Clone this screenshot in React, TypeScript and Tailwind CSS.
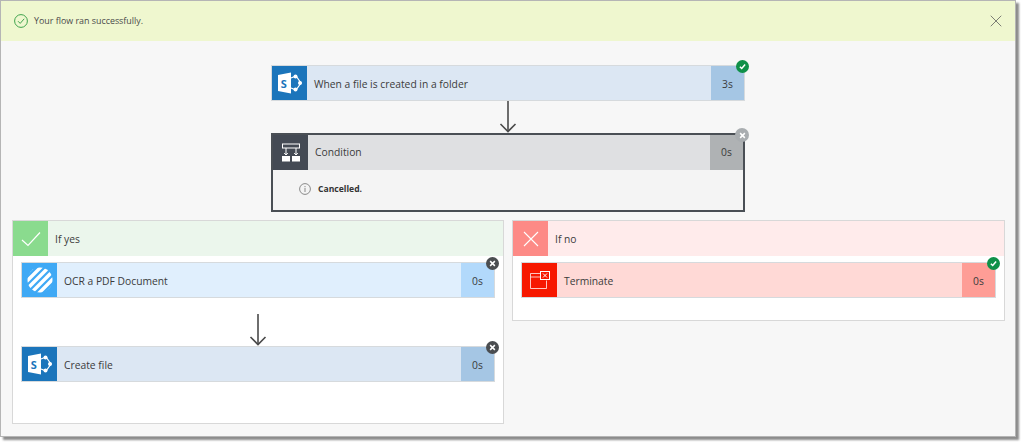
import { X } from 'lucide-react';
import type { ReactNode } from 'react';

function SharePointIcon() {
  return (
    <svg width="26" height="22" viewBox="0 0 26 22" fill="none">
      <path d="M14 6 L19 4 L24 11 L19 18 L14 16" stroke="white" strokeWidth="1.2" />
      <circle cx="18.5" cy="4.5" r="2" fill="white" />
      <circle cx="23" cy="11" r="2" fill="white" />
      <circle cx="18.5" cy="17.5" r="2" fill="white" />
      <path d="M1 3 L14 0.5 V21.5 L1 19 Z" fill="white" />
      <text x="3.8" y="15.5" fontSize="11" fontWeight="700" fill="#1b75bb" fontFamily="'Open Sans', sans-serif">S</text>
    </svg>
  );
}

function OcrIcon() {
  return (
    <svg width="26" height="26" viewBox="0 0 26 26">
      <defs>
        <clipPath id="ocr-circle">
          <circle cx="13" cy="13" r="12.5" />
        </clipPath>
      </defs>
      <g clipPath="url(#ocr-circle)" stroke="white" strokeWidth="3.4">
        <path d="M-2 8 L8 -2" />
        <path d="M-2 16 L16 -2" />
        <path d="M-2 24 L24 -2" />
        <path d="M2 28 L28 2" />
        <path d="M10 28 L28 10" />
        <path d="M18 28 L28 18" />
      </g>
    </svg>
  );
}

function ConditionIcon() {
  return (
    <svg width="20" height="20" viewBox="0 0 20 20" fill="none">
      <rect x="1.5" y="1" width="17" height="4" stroke="white" strokeWidth="1" />
      <path d="M5 5 V12 M15 5 V12" stroke="white" strokeWidth="1" />
      <path d="M3.2 10 L5 12 L6.8 10 M13.2 10 L15 12 L16.8 10" stroke="white" strokeWidth="1" />
      <rect x="1" y="13" width="8" height="5.5" fill="white" />
      <rect x="11" y="13" width="8" height="5.5" fill="white" />
    </svg>
  );
}

function TerminateIcon() {
  return (
    <svg width="20" height="19" viewBox="0 0 20 19" fill="none" stroke="white" strokeWidth="1">
      <path d="M10 2.5 H0.5 V17.5 H16.5 V9.5" opacity="0.75" />
      <path d="M0.5 6 H10" opacity="0.75" />
      <rect x="10.5" y="0.5" width="9" height="8" />
      <path d="M13 2.5 L17 6.5 M17 2.5 L13 6.5" />
    </svg>
  );
}

function Badge({ ok, dark, ringed }: { ok?: boolean; dark?: boolean; ringed?: boolean }) {
  return (
    <span
      className={`absolute flex items-center justify-center rounded-full ${
        ok ? 'bg-[#0f9048]' : dark ? 'bg-[#4a4d50]' : 'bg-[#a9adb0]'
      } ${ringed ? 'w-[14px] h-[14px] -top-[5px] -right-[4px]' : 'w-[13px] h-[13px] -top-[6px] -right-[5px]'}`}
    >
      <svg width="7" height="7" viewBox="0 0 8 8" fill="none" stroke="white" strokeWidth="1.7">
        {ok ? <path d="M1 4.3 L3.1 6.3 L7 1.8" /> : <path d="M1.3 1.3 L6.7 6.7 M6.7 1.3 L1.3 6.7" />}
      </svg>
    </span>
  );
}

function StepCard({
  title,
  time,
  icon,
  iconBg,
  bodyBg,
  timeBg,
  badge,
}: {
  title: string;
  time: string;
  icon: ReactNode;
  iconBg: string;
  bodyBg: string;
  timeBg: string;
  badge: ReactNode;
}) {
  return (
    <div className={`relative flex h-[36px] w-full border border-[#d6dadd] ${bodyBg}`}>
      <div className={`flex w-[35px] shrink-0 items-center justify-center ${iconBg}`}>{icon}</div>
      <div className="flex-1 pl-[7px] leading-[36px]">{title}</div>
      <div className={`w-[33px] text-center leading-[36px] ${timeBg}`}>{time}</div>
      {badge}
    </div>
  );
}

function DownArrow() {
  return (
    <svg width="18" height="32" viewBox="0 0 18 32" fill="none" stroke="#4a4a4a" strokeWidth="1.6" className="mx-auto block">
      <path d="M9 0 V30" />
      <path d="M1.5 23 L9 30.5 L16.5 23" />
    </svg>
  );
}

function BranchHeader({ title, icon, iconBg, bodyBg }: { title: string; icon: ReactNode; iconBg: string; bodyBg: string }) {
  return (
    <div className={`flex h-[35px] ${bodyBg}`}>
      <div className={`flex w-[35px] items-center justify-center ${iconBg}`}>{icon}</div>
      <div className="pl-[7px] leading-[36px]">{title}</div>
    </div>
  );
}

export default function App() {
  return (
    <div className="h-[444px] w-[1024px] bg-white font-['Open_Sans',sans-serif] text-[10.3px] text-[#3b3b3b]">
      <div className="h-[437px] w-[1016px] border border-[#b5b5b5] bg-[#f7f7f7] shadow-[3px_3px_2px_#8c8c8c]">
        <div className="flex h-[40px] items-center bg-[#eff7cf] pl-[13px] pr-[9px]">
          <svg width="14" height="14" viewBox="0 0 14 14" fill="none" stroke="#3fa34d" strokeWidth="1">
            <circle cx="7" cy="7" r="6.4" />
            <path d="M4 7.2 L6.2 9.4 L10.2 4.8" />
          </svg>
          <span className="ml-[6px] flex-1 text-[8.9px] text-[#4a4a4a]">Your flow ran successfully.</span>
          <X size={20} strokeWidth={0.9} className="text-[#555]" />
        </div>

        <div className="pl-[11px] pt-[24px]">
          <div className="ml-[259px] w-[474px]">
            <StepCard
              title="When a file is created in a folder"
              time="3s"
              icon={<SharePointIcon />}
              iconBg="bg-[#1b75bb]"
              bodyBg="bg-[#dce7f3]"
              timeBg="bg-[#a5c6e4]"
              badge={<Badge ok />}
            />
            <DownArrow />
            <div className="relative h-[79px] border-2 border-[#4a4f55] bg-[#f4f4f4]">
              <div className="flex h-[35px] bg-[#dfe0e2]">
                <div className="flex w-[35px] items-center justify-center bg-[#444a54]">
                  <ConditionIcon />
                </div>
                <div className="flex-1 pl-[7px] leading-[34px]">Condition</div>
                <div className="w-[33px] bg-[#afb2b4] text-center leading-[35px]">0s</div>
              </div>
              <div className="flex items-center pl-[26px] pt-[13px]">
                <svg width="12" height="12" viewBox="0 0 12 12" fill="none" stroke="#8a8a8a" strokeWidth="1">
                  <circle cx="6" cy="6" r="5.4" />
                  <path d="M6 5 V9 M6 3 V4.2" />
                </svg>
                <span className="ml-[7px] text-[8.6px] font-bold text-[#333]">Cancelled.</span>
              </div>
              <span className="absolute -right-[2px] -top-[2px]">
                <Badge ringed />
              </span>
            </div>
          </div>

          <div className="mt-[8px] flex items-start gap-[8px]">
            <div className="h-[204px] w-[492px] shrink-0 border border-[#d8d8d8] bg-white">
              <BranchHeader
                title="If yes"
                iconBg="bg-[#8adb8e]"
                bodyBg="bg-[#ebf6ec]"
                icon={
                  <svg width="20" height="16" viewBox="0 0 20 16" fill="none" stroke="white" strokeWidth="1.2">
                    <path d="M1 9 L7 14.5 L19 1.5" />
                  </svg>
                }
              />
              <div className="px-[8px] pt-[6px]">
                <StepCard
                  title="OCR a PDF Document"
                  time="0s"
                  icon={<OcrIcon />}
                  iconBg="bg-[#3fa9f5]"
                  bodyBg="bg-[#e0effd]"
                  timeBg="bg-[#b2d9fb]"
                  badge={<Badge dark />}
                />
                <div className="pt-[16px]">
                  <DownArrow />
                </div>
                <StepCard
                  title="Create file"
                  time="0s"
                  icon={<SharePointIcon />}
                  iconBg="bg-[#1b75bb]"
                  bodyBg="bg-[#dce7f3]"
                  timeBg="bg-[#a5c6e4]"
                  badge={<Badge dark />}
                />
              </div>
            </div>

            <div className="h-[101px] w-[493px] shrink-0 border border-[#d8d8d8] bg-white">
              <BranchHeader
                title="If no"
                iconBg="bg-[#fd8a86]"
                bodyBg="bg-[#ffebeb]"
                icon={
                  <svg width="16" height="16" viewBox="0 0 16 16" fill="none" stroke="white" strokeWidth="1.1">
                    <path d="M1 1 L15 15 M15 1 L1 15" />
                  </svg>
                }
              />
              <div className="px-[8px] pt-[6px]">
                <StepCard
                  title="Terminate"
                  time="0s"
                  icon={<TerminateIcon />}
                  iconBg="bg-[#f71800]"
                  bodyBg="bg-[#ffd9d6]"
                  timeBg="bg-[#fe9d96]"
                  badge={<Badge ok />}
                />
              </div>
            </div>
          </div>
        </div>
      </div>
    </div>
  );
}
